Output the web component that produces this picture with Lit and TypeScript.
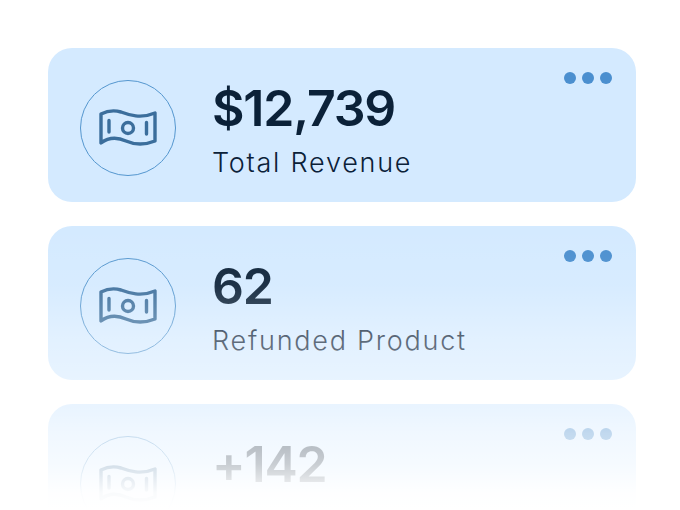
import { LitElement, html, css } from "lit";
import { customElement } from "lit/decorators.js";

const cards = [
  { value: "$12,739", label: "Total Revenue" },
  { value: "62", label: "Refunded Product" },
  { value: "+142", label: "" },
];

@customElement("app-root")
export class AppRoot extends LitElement {
  static styles = css`
    :host {
      display: block;
      position: relative;
      width: 680px;
      height: 510px;
      overflow: hidden;
      background: #fff;
      font-family: "Inter", "Liberation Sans", sans-serif;
    }
    .list {
      display: flex;
      flex-direction: column;
      gap: 24px;
      padding: 48px 44px 0 48px;
    }
    .card {
      flex: none;
      box-sizing: border-box;
      height: 154px;
      border-radius: 24px;
      background: #d4eaff;
      padding: 32px 24px 0 32px;
      display: flex;
      align-items: flex-start;
      gap: 36px;
    }
    .ring {
      flex: none;
      box-sizing: border-box;
      width: 96px;
      height: 96px;
      border-radius: 50%;
      border: 1.8px solid #5597cf;
      display: flex;
      align-items: center;
      justify-content: center;
    }
    .ring svg { display: block; }
    .text {
      flex: 1;
      color: #0b2138;
    }
    .value {
      font-size: 50px;
      line-height: 56px;
      font-weight: 600;
      letter-spacing: -1.2px;
    }
    .label {
      margin-top: 11px;
      min-height: 32px;
      font-size: 27px;
      line-height: 32px;
      font-weight: 350;
      letter-spacing: 1.75px;
    }
    .dots {
      flex: none;
      display: flex;
      gap: 6px;
      margin-top: -8px;
    }
    .dots i {
      width: 12px;
      height: 12px;
      border-radius: 50%;
      background: #4b8fcf;
    }
    .fade {
      position: absolute;
      left: 0;
      right: 0;
      bottom: 0;
      height: 284px;
      background: linear-gradient(
        to bottom,
        rgba(255, 255, 255, 0),
        rgba(255, 255, 255, 0.08) 21%,
        rgba(255, 255, 255, 0.33) 40%,
        rgba(255, 255, 255, 0.46) 54%,
        rgba(255, 255, 255, 0.48) 63%,
        rgba(255, 255, 255, 0.66) 73%,
        rgba(255, 255, 255, 0.78) 84%,
        rgba(255, 255, 255, 0.97) 94%,
        rgba(255, 255, 255, 1)
      );
      pointer-events: none;
    }
  `;

  private icon() {
    return html`<svg width="58" height="40" viewBox="0 0 58 40" fill="none" stroke="#3b6e9c" stroke-width="3.4" stroke-linecap="round" stroke-linejoin="round">
      <path d="M2 6C8 3 15 2 22 4C30 7 42 11 56 5V33C46 37 36 37 27 33C18 29 10 29 2 35Z" />
      <circle cx="29" cy="20" r="5.500" />
      <path d="M10 12.500V24M47.500 14.500V26" />
    </svg>`;
  }

  render() {
    return html`
      <div class="list">
        ${cards.map(
          (c) => html`
            <div class="card">
              <div class="ring">${this.icon()}</div>
              <div class="text">
                <div class="value">${c.value}</div>
                <div class="label">${c.label}</div>
              </div>
              <div class="dots"><i></i><i></i><i></i></div>
            </div>
          `
        )}
      </div>
      <div class="fade"></div>
    `;
  }
}
